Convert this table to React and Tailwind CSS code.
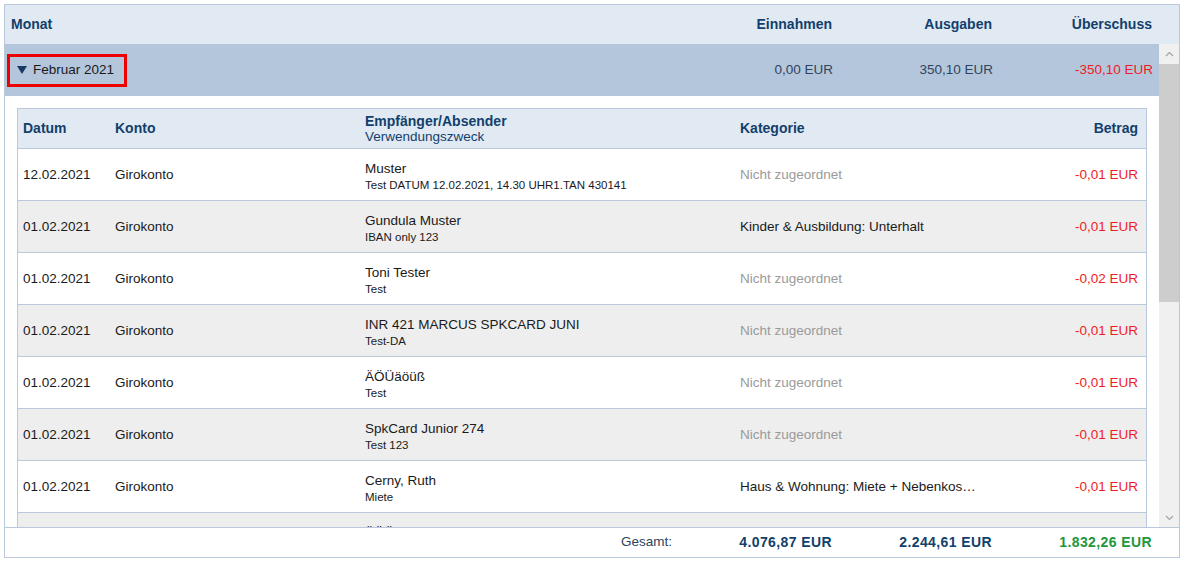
const rows = [
  { date: '12.02.2021', konto: 'Girokonto', name: 'Muster', zweck: 'Test DATUM 12.02.2021, 14.30 UHR1.TAN 430141', kat: 'Nicht zugeordnet', none: true, betrag: '-0,01 EUR' },
  { date: '01.02.2021', konto: 'Girokonto', name: 'Gundula Muster', zweck: 'IBAN only 123', kat: 'Kinder & Ausbildung: Unterhalt', betrag: '-0,01 EUR' },
  { date: '01.02.2021', konto: 'Girokonto', name: 'Toni Tester', zweck: 'Test', kat: 'Nicht zugeordnet', none: true, betrag: '-0,02 EUR' },
  { date: '01.02.2021', konto: 'Girokonto', name: 'INR 421 MARCUS SPKCARD JUNI', zweck: 'Test-DA', kat: 'Nicht zugeordnet', none: true, betrag: '-0,01 EUR' },
  { date: '01.02.2021', konto: 'Girokonto', name: 'ÄÖÜäöüß', zweck: 'Test', kat: 'Nicht zugeordnet', none: true, betrag: '-0,01 EUR' },
  { date: '01.02.2021', konto: 'Girokonto', name: 'SpkCard Junior 274', zweck: 'Test 123', kat: 'Nicht zugeordnet', none: true, betrag: '-0,01 EUR' },
  { date: '01.02.2021', konto: 'Girokonto', name: 'Cerny, Ruth', zweck: 'Miete', kat: 'Haus & Wohnung: Miete + Nebenkosten', betrag: '-0,01 EUR' },
  { date: '01.02.2021', konto: 'Girokonto', name: 'ÄÖÜäöüß', zweck: 'Test', kat: 'Nicht zugeordnet', none: true, betrag: '-0,01 EUR' },
]

function Chevron({ up }) {
  return (
    <svg width="9" height="6" viewBox="0 0 9 6" fill="none">
      <polyline
        points={up ? '1,5 4.5,1.5 8,5' : '1,1 4.5,4.5 8,1'}
        stroke="#a3a3a3"
        strokeWidth="1.2"
      />
    </svg>
  )
}

export default function App() {
  return (
    <div className="p-[4px] bg-white font-['Liberation_Sans',Arial,sans-serif] text-[13.5px] text-[#1a1a1a]">
      <div className="border border-[#b9c9db] flex flex-col">
        {/* Column header */}
        <div className="h-[39px] bg-[#e1e9f3] flex items-center font-bold text-[14px] text-[#123f6b] pr-[27px]">
          <div className="flex-1 pl-[6px]">Monat</div>
          <div className="w-[160px] text-right">Einnahmen</div>
          <div className="w-[160px] text-right">Ausgaben</div>
          <div className="w-[160px] text-right">Überschuss</div>
        </div>

        {/* Scroll area */}
        <div className="h-[483px] flex">
          <div className="flex-1 overflow-hidden">
            {/* Month row */}
            <div className="h-[52px] bg-[#b4c6db] flex items-center pr-[6px]">
              <div className="flex-1 pl-[2px]">
                <div className="inline-flex items-center h-[33px] w-[120px] border-[3px] border-[#ec0000] pl-[7px] gap-[6px]">
                  <svg width="10" height="8" viewBox="0 0 10 8">
                    <polygon points="0,0 10,0 5,8" fill="#173b62" />
                  </svg>
                  <span>Februar 2021</span>
                </div>
              </div>
              <div className="w-[160px] text-right text-[#2e4460]">0,00 EUR</div>
              <div className="w-[160px] text-right text-[#2e4460]">350,10 EUR</div>
              <div className="w-[160px] text-right text-[#ee1c24]">-350,10 EUR</div>
            </div>

            {/* Detail table */}
            <div className="px-[12px] pt-[12px]">
              <div className="border-x border-t border-[#b9c9db]">
                <div className="h-[40px] bg-[#e1e9f3] border-b border-[#b9c9db] grid grid-cols-[92px_250px_375px_250px_1fr] items-center text-[#123f6b]">
                  <div className="pl-[5px] font-bold text-[14px]">Datum</div>
                  <div className="pl-[5px] font-bold text-[14px]">Konto</div>
                  <div className="pl-[5px] leading-[16px]">
                    <div className="font-bold text-[14px]">Empfänger/Absender</div>
                    <div>Verwendungszweck</div>
                  </div>
                  <div className="pl-[5px] font-bold text-[14px]">Kategorie</div>
                  <div className="pr-[8px] text-right font-bold text-[14px]">Betrag</div>
                </div>
                {rows.map((r, i) => (
                  <div
                    key={i}
                    className={`h-[52px] pt-[2px] border-b border-[#b9c9db] grid grid-cols-[92px_250px_375px_250px_1fr] items-center ${i % 2 ? 'bg-[#eeeeee]' : 'bg-white'}`}
                  >
                    <div className="pl-[5px]">{r.date}</div>
                    <div className="pl-[5px]">{r.konto}</div>
                    <div className="pl-[5px] pt-[2px] leading-[16px]">
                      <div className="truncate">{r.name}</div>
                      <div className="truncate text-[11.5px]">{r.zweck}</div>
                    </div>
                    <div className={`pl-[5px] pr-[9px] truncate ${r.none ? 'text-[#9a9a9a]' : ''}`}>{r.kat}</div>
                    <div className="pr-[8px] text-right text-[#ee1c24]">{r.betrag}</div>
                  </div>
                ))}
              </div>
            </div>
          </div>

          {/* Scrollbar */}
          <div className="w-[20px] bg-[#f0f0f0] flex flex-col">
            <div className="h-[20px] flex items-center justify-center">
              <Chevron up />
            </div>
            <div className="h-[238px] bg-[#cdcdcd]" />
            <div className="flex-1" />
            <div className="h-[18px] flex items-center justify-center">
              <Chevron />
            </div>
          </div>
        </div>

        {/* Footer */}
        <div className="h-[30px] border-t border-[#b9c9db] flex items-center pr-[27px] font-bold text-[14px] tracking-[0.4px] text-[#123f6b]">
          <div className="flex-1" />
          <div className="w-[160px] text-right font-normal text-[13.5px] tracking-normal text-[#2e4460]">Gesamt:</div>
          <div className="w-[160px] text-right">4.076,87 EUR</div>
          <div className="w-[160px] text-right">2.244,61 EUR</div>
          <div className="w-[160px] text-right text-[#239640]">1.832,26 EUR</div>
        </div>
      </div>
    </div>
  )
}
